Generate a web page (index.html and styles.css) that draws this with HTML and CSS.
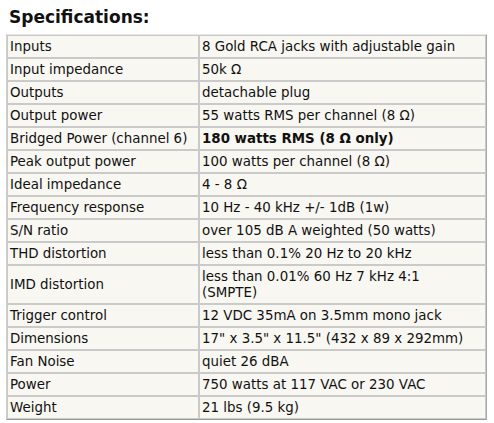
FILE: index.html
```html
<!DOCTYPE html>
<html>
<head>
<meta charset="utf-8">
<link rel="stylesheet" href="styles.css">
</head>
<body>
<div class="page">
<h2 class="title">Specifications:</h2>
<table class="specs">
<tr><td class="k">Inputs</td><td class="v">8 Gold RCA jacks with adjustable gain</td></tr>
<tr><td class="k">Input impedance</td><td class="v">50k Ω</td></tr>
<tr><td class="k">Outputs</td><td class="v">detachable plug</td></tr>
<tr><td class="k">Output power</td><td class="v">55 watts RMS per channel (8 Ω)</td></tr>
<tr><td class="k">Bridged Power (channel 6)</td><td class="v"><strong>180 watts RMS (8 Ω only)</strong></td></tr>
<tr><td class="k">Peak output power</td><td class="v">100 watts per channel (8 Ω)</td></tr>
<tr><td class="k">Ideal impedance</td><td class="v">4 - 8 Ω</td></tr>
<tr><td class="k">Frequency response</td><td class="v">10 Hz - 40 kHz +/- 1dB (1w)</td></tr>
<tr><td class="k">S/N ratio</td><td class="v">over 105 dB A weighted (50 watts)</td></tr>
<tr><td class="k">THD distortion</td><td class="v">less than 0.1% 20 Hz to 20 kHz</td></tr>
<tr><td class="k">IMD distortion</td><td class="v">less than 0.01% 60 Hz 7 kHz 4:1<br>(SMPTE)</td></tr>
<tr><td class="k">Trigger control</td><td class="v">12 VDC 35mA on 3.5mm mono jack</td></tr>
<tr><td class="k">Dimensions</td><td class="v">17" x 3.5" x 11.5" (432 x 89 x 292mm)</td></tr>
<tr><td class="k">Fan Noise</td><td class="v">quiet 26 dBA</td></tr>
<tr><td class="k">Power</td><td class="v">750 watts at 117 VAC or 230 VAC</td></tr>
<tr><td class="k">Weight</td><td class="v">21 lbs (9.5 kg)</td></tr>
</table>
</div>
</body>
</html>
```
FILE: styles.css
```css
html, body {
  margin: 0;
  padding: 0;
  background: #ffffff;
}
.page {
  padding: 0 7px 0 6px;
  font-family: "DejaVu Sans", Verdana, sans-serif;
  color: #111;
}
.title {
  margin: 0;
  padding: 6px 0 0 3px;
  height: 34px;
  box-sizing: border-box;
  font-size: 17px;
  font-weight: bold;
  line-height: 22px;
}
.specs {
  width: 481px;
  border-collapse: separate;
  border-spacing: 0;
  background: #f8f7f1;
  border-top: 1px solid #e6e6e6;
  border-left: 1px solid #cfcfcf;
  border-right: 1px solid #a8a8a8;
  border-bottom: 1px solid #9a9a9a;
  font-size: 13.4px;
  line-height: 16px;
}
.specs td {
  border: 1px solid #cacaca;
  padding: 3px 2px 2px 2px;
  vertical-align: middle;
  text-align: left;
}
.specs td.k {
  width: 186px;
}
.specs strong {
  font-weight: bold;
}
```
